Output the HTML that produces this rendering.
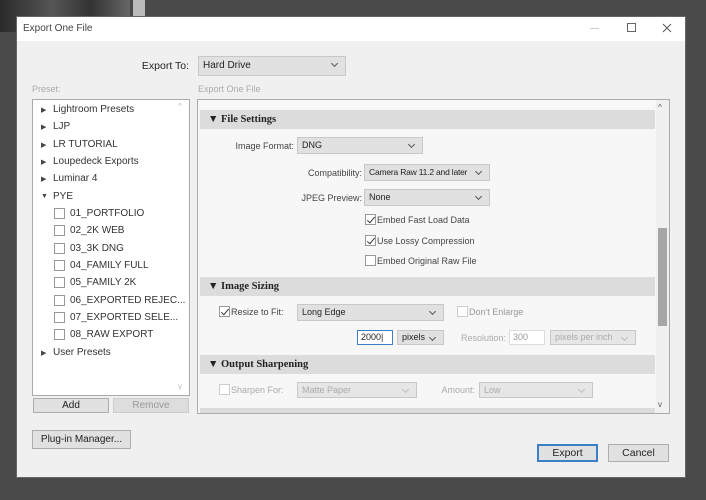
<!DOCTYPE html>
<html><head><meta charset="utf-8"><style>
*{margin:0;padding:0;box-sizing:border-box}
body{width:706px;height:500px;background:#4a4a4a;position:relative;overflow:hidden;font-family:"Liberation Sans",sans-serif;font-size:10px;color:#222}
.a{position:absolute;white-space:nowrap}
.r{position:absolute;white-space:nowrap;text-align:right;font-size:9px;color:#444}
.sel{position:absolute;background:#e1e1e1;border:1px solid #c8c8c8;padding-left:4px;font-size:9px;line-height:15px;overflow:hidden;white-space:nowrap}
.sel:after{content:"";position:absolute;right:8px;top:4px;width:4px;height:4px;border-right:1px solid #555;border-bottom:1px solid #555;transform:rotate(45deg)}
.dis{color:#aaa;background:#e6e6e6}
.dis:after{border-color:#bbb}
.cb{position:absolute;width:11px;height:11px;border:1px solid #999;background:#fff}
.cb.on:after{content:"";position:absolute;left:3px;top:0;width:3px;height:7px;border-right:1.5px solid #333;border-bottom:1.5px solid #333;transform:rotate(40deg)}
.hdr{position:absolute;left:200px;width:455px;height:19px;background:#dcdcdc;font-family:"Liberation Serif",serif;font-weight:bold;font-size:10.5px;line-height:19px;padding-left:8px}
.btn{position:absolute;background:#e1e1e1;border:1px solid #adadad;text-align:center;font-size:10px}
.li{position:absolute;left:53px;font-size:10px;color:#333}
.tri{position:absolute;left:41px;font-size:7px;color:#444}
.t9{font-size:9px;color:#444}
</style></head><body>
<div class="a" style="left:0;top:0;width:130px;height:32px;background:linear-gradient(90deg,#2a2a2a,#555 40%,#333 70%,#666)"></div>
<div class="a" style="left:133px;top:0;width:12px;height:18px;background:#bbb"></div>
<div class="a" style="left:16px;top:16px;width:670px;height:462px;background:#f0f0f0;border:1px solid #666"></div>
<div class="a" style="left:17px;top:17px;width:668px;height:24px;background:#fff"></div>
<div class="a" style="left:23px;top:23px;font-size:10px;color:#444">Export One File</div>
<div class="a" style="left:590px;top:28px;width:9px;height:1px;background:#ccc"></div>
<div class="a" style="left:627px;top:23px;width:9px;height:9px;border:1px solid #666"></div>
<svg class="a" style="left:662px;top:23px" width="10" height="10"><path d="M1 1L9 9M9 1L1 9" stroke="#555" stroke-width="1"/></svg>

<div class="r" style="right:517px;top:60px;font-size:10.5px;color:#222">Export To:</div>
<div class="sel" style="left:198px;top:56px;width:148px;height:20px;line-height:18px;font-size:10px">Hard Drive</div>
<div class="a" style="left:32px;top:84px;color:#aaa;font-size:9px">Preset:</div>
<div class="a" style="left:198px;top:84px;color:#aaa;font-size:9px">Export One File</div>

<div class="a" style="left:32px;top:99px;width:158px;height:297px;background:#fff;border:1px solid #aaa"></div>
<div class="a" style="left:178px;top:102px;color:#bbb;font-size:8px">^</div>
<div class="a" style="left:178px;top:382px;color:#bbb;font-size:8px">v</div>
<span class="tri" style="top:106px">▶</span><span class="li" style="top:104px">Lightroom Presets</span>
<span class="tri" style="top:123px">▶</span><span class="li" style="top:121px">LJP</span>
<span class="tri" style="top:141px">▶</span><span class="li" style="top:139px">LR TUTORIAL</span>
<span class="tri" style="top:158px">▶</span><span class="li" style="top:156px">Loupedeck Exports</span>
<span class="tri" style="top:175px">▶</span><span class="li" style="top:173px">Luminar 4</span>
<span class="tri" style="top:193px">▼</span><span class="li" style="top:191px">PYE</span>
<div class="cb" style="left:54px;top:208px"></div><span class="li" style="left:70px;top:208px">01_PORTFOLIO</span>
<div class="cb" style="left:54px;top:225px"></div><span class="li" style="left:70px;top:225px">02_2K WEB</span>
<div class="cb" style="left:54px;top:243px"></div><span class="li" style="left:70px;top:243px">03_3K DNG</span>
<div class="cb" style="left:54px;top:260px"></div><span class="li" style="left:70px;top:260px">04_FAMILY FULL</span>
<div class="cb" style="left:54px;top:277px"></div><span class="li" style="left:70px;top:277px">05_FAMILY 2K</span>
<div class="cb" style="left:54px;top:295px"></div><span class="li" style="left:70px;top:295px">06_EXPORTED REJEC...</span>
<div class="cb" style="left:54px;top:312px"></div><span class="li" style="left:70px;top:312px">07_EXPORTED SELE...</span>
<div class="cb" style="left:54px;top:329px"></div><span class="li" style="left:70px;top:329px">08_RAW EXPORT</span>
<span class="tri" style="top:349px">▶</span><span class="li" style="top:347px">User Presets</span>

<div class="btn" style="left:33px;top:398px;width:76px;height:15px;line-height:13px">Add</div>
<div class="btn" style="left:113px;top:398px;width:76px;height:15px;line-height:13px;color:#999;background:#ddd;border-color:#ccc">Remove</div>
<div class="btn" style="left:32px;top:430px;width:99px;height:19px;line-height:17px">Plug-in Manager...</div>

<div class="a" style="left:197px;top:99px;width:473px;height:315px;background:#f7f7f7;border:1px solid #aaa"></div>
<div class="a" style="left:656px;top:100px;width:13px;height:313px;background:#f0f0f0"></div>
<div class="a" style="left:658px;top:228px;width:9px;height:98px;background:#a6a6a6"></div>
<div class="a" style="left:658px;top:103px;font-size:8px;color:#555">^</div>
<div class="a" style="left:658px;top:400px;font-size:8px;color:#555">v</div>

<div class="hdr" style="top:110px">▼ File Settings</div>
<div class="r" style="right:412px;top:141px">Image Format:</div>
<div class="sel" style="left:297px;top:137px;width:126px;height:17px">DNG</div>
<div class="r" style="right:344px;top:168px">Compatibility:</div>
<div class="sel" style="left:364px;top:164px;width:126px;height:17px;font-size:8.5px;letter-spacing:-0.2px">Camera Raw 11.2 and later</div>
<div class="r" style="right:344px;top:193px">JPEG Preview:</div>
<div class="sel" style="left:364px;top:189px;width:126px;height:17px">None</div>
<div class="cb on" style="left:365px;top:214px"></div><div class="a t9" style="left:377px;top:215px">Embed Fast Load Data</div>
<div class="cb on" style="left:365px;top:235px"></div><div class="a t9" style="left:377px;top:236px">Use Lossy Compression</div>
<div class="cb" style="left:365px;top:255px"></div><div class="a t9" style="left:377px;top:256px">Embed Original Raw File</div>

<div class="hdr" style="top:277px">▼ Image Sizing</div>
<div class="cb on" style="left:219px;top:306px"></div><div class="a t9" style="left:231px;top:307px">Resize to Fit:</div>
<div class="sel" style="left:297px;top:304px;width:147px;height:17px">Long Edge</div>
<div class="cb" style="left:457px;top:306px;border-color:#ccc"></div><div class="a t9" style="left:469px;top:307px;color:#999">Don't Enlarge</div>
<div class="a" style="left:357px;top:330px;width:36px;height:15px;background:#fff;border:1px solid #3c7fc4;font-size:9px;line-height:13px;padding-left:3px">2000|</div>
<div class="sel" style="left:397px;top:330px;width:47px;height:15px;line-height:13px">pixels</div>
<div class="r" style="right:200px;top:333px;color:#aaa">Resolution:</div>
<div class="a" style="left:509px;top:330px;width:36px;height:15px;background:#fff;border:1px solid #ddd;font-size:9px;line-height:13px;padding-left:3px;color:#999">300</div>
<div class="sel dis" style="left:550px;top:330px;width:86px;height:15px;line-height:13px">pixels per inch</div>

<div class="hdr" style="top:355px">▼ Output Sharpening</div>
<div class="cb" style="left:219px;top:384px;border-color:#ccc"></div><div class="a t9" style="left:231px;top:385px;color:#aaa">Sharpen For:</div>
<div class="sel dis" style="left:297px;top:382px;width:120px;height:16px">Matte Paper</div>
<div class="r" style="right:231px;top:385px;color:#aaa">Amount:</div>
<div class="sel dis" style="left:479px;top:382px;width:114px;height:16px">Low</div>
<div class="a" style="left:200px;top:408px;width:455px;height:5px;background:#dcdcdc"></div>

<div class="btn" style="left:537px;top:444px;width:61px;height:18px;line-height:14px;border:2px solid #3c7fc4;font-size:10.5px">Export</div>
<div class="btn" style="left:608px;top:444px;width:61px;height:18px;line-height:16px;font-size:10.5px">Cancel</div>
</body></html>
